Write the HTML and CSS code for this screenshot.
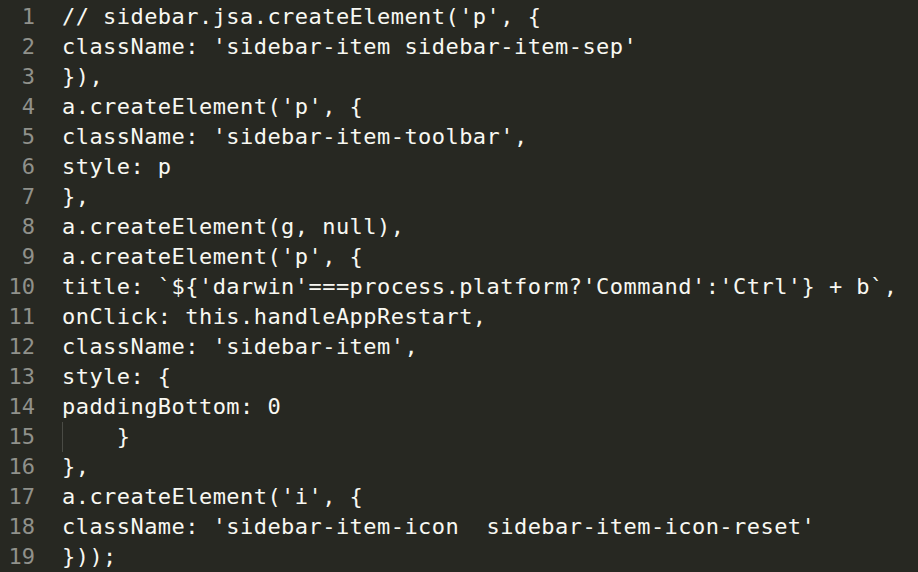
FILE: index.html
```html
<!DOCTYPE html>
<html>
<head>
<meta charset="utf-8">
<link rel="stylesheet" href="styles.css">
</head>
<body>
<div class="editor">
  <div class="line"><span class="ln">1</span><span class="code">// sidebar.jsa.createElement('p', {</span></div>
  <div class="line"><span class="ln">2</span><span class="code">className: 'sidebar-item sidebar-item-sep'</span></div>
  <div class="line"><span class="ln">3</span><span class="code">}),</span></div>
  <div class="line"><span class="ln">4</span><span class="code">a.createElement('p', {</span></div>
  <div class="line"><span class="ln">5</span><span class="code">className: 'sidebar-item-toolbar',</span></div>
  <div class="line"><span class="ln">6</span><span class="code">style: p</span></div>
  <div class="line"><span class="ln">7</span><span class="code">},</span></div>
  <div class="line"><span class="ln">8</span><span class="code">a.createElement(g, null),</span></div>
  <div class="line"><span class="ln">9</span><span class="code">a.createElement('p', {</span></div>
  <div class="line"><span class="ln">10</span><span class="code">title: `${'darwin'===process.platform?'Command':'Ctrl'} + b`,</span></div>
  <div class="line"><span class="ln">11</span><span class="code">onClick: this.handleAppRestart,</span></div>
  <div class="line"><span class="ln">12</span><span class="code">className: 'sidebar-item',</span></div>
  <div class="line"><span class="ln">13</span><span class="code">style: {</span></div>
  <div class="line"><span class="ln">14</span><span class="code">paddingBottom: 0</span></div>
  <div class="line"><span class="ln">15</span><span class="code"><span class="indent">    </span>}</span></div>
  <div class="line"><span class="ln">16</span><span class="code">},</span></div>
  <div class="line"><span class="ln">17</span><span class="code">a.createElement('i', {</span></div>
  <div class="line"><span class="ln">18</span><span class="code">className: 'sidebar-item-icon  sidebar-item-icon-reset'</span></div>
  <div class="line"><span class="ln">19</span><span class="code">}));</span></div>
</div>
</body>
</html>
```
FILE: styles.css
```css
html, body {
  margin: 0;
  padding: 0;
  background: #272822;
}
body {
  width: 918px;
  height: 572px;
  overflow: hidden;
}
.editor {
  display: flex;
  flex-direction: column;
  padding-top: 2px;
  font-family: "DejaVu Sans Mono", "Liberation Mono", monospace;
  font-size: 22px;
  letter-spacing: 0.45px;
  line-height: 30px;
  color: #f8f8f2;
}
.line {
  display: flex;
  gap: 27px;
  height: 30px;
}
.ln {
  width: 35px;
  flex: none;
  text-align: right;
  color: #90918b;
  letter-spacing: 0;
}
.code {
  white-space: pre;
}
.indent {
  display: inline-block;
  height: 30px;
  vertical-align: top;
  background: linear-gradient(#4a4b45, #4a4b45) no-repeat 0 0 / 1px 100%;
}
```
